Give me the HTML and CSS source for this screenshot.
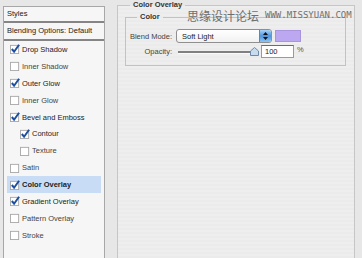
FILE: index.html
```html
<!DOCTYPE html>
<html lang="en">
<head>
    <meta charset="UTF-8">
    <meta name="viewport" content="width=device-width, initial-scale=1.0">
    <title>Layer Style - Color Overlay</title>
    <link rel="stylesheet" href="styles.css">
</head>
<body>
    <svg class="defs" width="0" height="0">
        <symbol id="box" viewBox="0 0 11 11">
            <rect x="0.5" y="1.5" width="9" height="9" fill="#fff" stroke="#a8a8a8"/>
        </symbol>
        <symbol id="check" viewBox="0 0 11 11">
            <rect x="0.5" y="1.5" width="9" height="9" fill="#fff" stroke="#a8a8a8"/>
            <path d="M2 5.5 L4.5 8.5 L10 0.8" fill="none" stroke="#1d4f9e" stroke-width="2.2"/>
        </symbol>
    </svg>

    <div class="dialog">
        <div class="styles-list">
            <div class="list-head">Styles</div>
            <div class="list-head tall">Blending Options: Default</div>
            <ul class="effects">
                <li class="on"><svg><use href="#check"/></svg>Drop Shadow</li>
                <li><svg><use href="#box"/></svg>Inner Shadow</li>
                <li class="on"><svg><use href="#check"/></svg>Outer Glow</li>
                <li><svg><use href="#box"/></svg>Inner Glow</li>
                <li class="on"><svg><use href="#check"/></svg>Bevel and Emboss</li>
                <li class="on sub"><svg><use href="#check"/></svg>Contour</li>
                <li class="sub"><svg><use href="#box"/></svg>Texture</li>
                <li><svg><use href="#box"/></svg>Satin</li>
                <li class="on selected"><svg><use href="#check"/></svg>Color Overlay</li>
                <li class="on"><svg><use href="#check"/></svg>Gradient Overlay</li>
                <li><svg><use href="#box"/></svg>Pattern Overlay</li>
                <li><svg><use href="#box"/></svg>Stroke</li>
            </ul>
        </div>

        <fieldset class="panel">
            <legend>Color Overlay</legend>
            <fieldset class="group">
                <legend>Color</legend>
                <div class="form-grid">
                    <label>Blend Mode:</label>
                    <div class="row">
                        <div class="select">
                            <span>Soft Light</span>
                            <span class="stepper">
                                <svg width="5" height="8" viewBox="0 0 5 8"><path d="M2.5 0 L5 3 H0 Z M0 5 H5 L2.5 8 Z" fill="#111"/></svg>
                            </span>
                        </div>
                        <div class="swatch"></div>
                    </div>
                    <label>Opacity:</label>
                    <div class="row">
                        <div class="slider">
                            <svg class="thumb" width="9" height="9" viewBox="0 0 9 9"><path d="M0.5 8.5 V4 L4.5 0.5 L8.5 4 V8.5 Z" fill="#c9dcef" stroke="#6f8aa6"/></svg>
                        </div>
                        <div class="num">100</div>
                        <span class="unit">%</span>
                    </div>
                </div>
            </fieldset>
        </fieldset>

        <div class="watermark">思缘设计论坛<span>WWW.MISSYUAN.COM</span></div>
    </div>
</body>
</html>
```

FILE: styles.css
```css
body {
    margin: 0;
    height: 258px;
    overflow: hidden;
    background-color: #e7e7e7;
    font-family: "Liberation Sans", Arial, sans-serif;
    font-size: 7.5px;
    color: #222;
}
.defs {
    position: absolute;
}
.dialog {
    position: relative;
    display: flex;
    align-items: flex-start;
}
.styles-list {
    margin: 6px 0 0 3px;
    width: 100px;
    height: 251px;
    border: 1px solid #a7a7a7;
    border-bottom: none;
    background: #f6f6f6;
}
.list-head {
    height: 14px;
    line-height: 14px;
    padding-left: 3px;
    border-bottom: 2px solid #858585;
}
.list-head.tall {
    height: 16px;
    line-height: 16px;
}
.effects {
    list-style: none;
    margin: 0 3px;
    padding: 0;
}
.effects li {
    height: 16.9px;
    display: flex;
    align-items: center;
    gap: 2px;
    padding-left: 3px;
    color: #444;
}
.effects li.on {
    color: #222;
}
.effects li.sub {
    padding-left: 13px;
}
.effects li.selected {
    background: #c8dcf5;
    font-weight: bold;
}
.effects svg {
    width: 10px;
    height: 10px;
    flex: none;
}
.panel {
    margin: 0 0 0 12px;
    padding: 0;
    min-width: 0;
    width: 238px;
    height: 258px;
    box-sizing: border-box;
    border: 1px solid #c6c6c6;
    border-bottom: none;
    background: repeating-linear-gradient(#eeeeee 0 2px, #ebebeb 2px 4px);
}
.panel legend {
    margin-left: 12px;
    padding: 0 3px;
    line-height: 10px;
    font-weight: bold;
    color: #333;
}
.group {
    margin: 2px 8px 0 7px;
    padding: 0;
    min-width: 0;
    border: 1px solid #c2c2c2;
}
.group legend {
    margin-left: 11px;
}
.form-grid {
    display: grid;
    grid-template-columns: 46px auto;
    column-gap: 4px;
    row-gap: 2px;
    padding: 7px 0;
}
.form-grid label {
    text-align: right;
    align-self: center;
    color: #444;
}
.row {
    display: flex;
    align-items: center;
}
.select {
    display: flex;
    align-items: center;
    box-sizing: border-box;
    width: 96px;
    height: 14px;
    padding-left: 5px;
    border: 1px solid #8f8f8f;
    border-radius: 3px;
    background: linear-gradient(#ffffff, #f1f1f1);
}
.stepper {
    margin-left: auto;
    width: 11px;
    height: 100%;
    display: flex;
    align-items: center;
    justify-content: center;
    border-left: 1px solid #5b86b8;
    border-radius: 0 2px 2px 0;
    background: linear-gradient(#a9d2f7, #4f94dc 50%, #8cc5f5);
}
.swatch {
    margin-left: 3px;
    box-sizing: border-box;
    width: 26px;
    height: 12px;
    border: 1px solid #a995de;
    background: #bca8f1;
}
.slider {
    position: relative;
    width: 79px;
    height: 13px;
    margin-left: 2px;
}
.slider::before {
    content: "";
    position: absolute;
    left: 0;
    right: 0;
    top: 6px;
    height: 2px;
    background: #808080;
    border-bottom: 1px solid #fafafa;
}
.thumb {
    position: absolute;
    left: 72px;
    top: 2px;
}
.num {
    margin-left: 4px;
    box-sizing: border-box;
    width: 33px;
    height: 13px;
    line-height: 11px;
    padding-left: 3px;
    border: 1px solid #9a9a9a;
    border-top-color: #6c6c6c;
    background: #fff;
}
.unit {
    margin-left: 3px;
    align-self: flex-start;
    color: #555;
}
.watermark {
    position: absolute;
    left: 187px;
    top: 9px;
    display: flex;
    align-items: center;
    font-family: "Noto Sans CJK SC", sans-serif;
    font-size: 12px;
    line-height: 13px;
    color: #6e6e6e;
}
.watermark span {
    margin-left: 6px;
    font-family: "DejaVu Sans Mono", monospace;
    font-size: 9px;
    color: #707070;
}
```
